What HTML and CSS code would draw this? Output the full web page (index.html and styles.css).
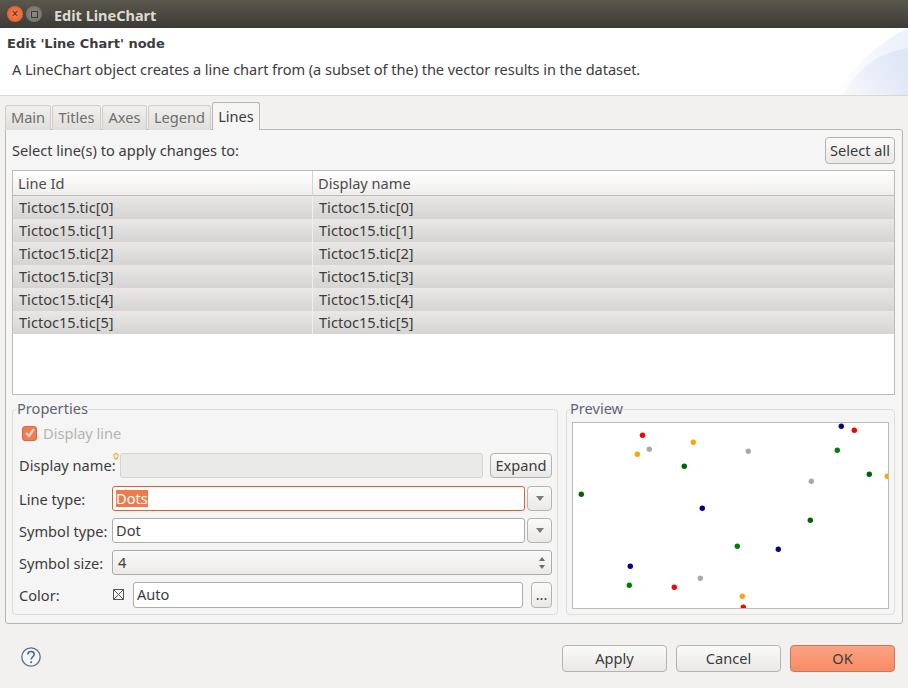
FILE: index.html
```html
<!DOCTYPE html>
<html lang="en">

<head>
    <meta charset="UTF-8">
    <title>Edit LineChart</title>
    <link rel="stylesheet" href="styles.css">
</head>

<body>
    <div class="titlebar">
        <span class="win-btn close">×</span>
        <span class="win-btn max"><i></i></span>
        <span class="win-title">Edit LineChart</span>
    </div>

    <div class="banner">
        <h1>Edit 'Line Chart' node</h1>
        <p>A LineChart object creates a line chart from (a subset of the) the vector results in the dataset.</p>
        <svg class="banner-art" viewBox="0 0 73 67">
            <defs>
                <linearGradient id="fade-a" x1="0" y1="1" x2="1" y2="0.4">
                    <stop offset="0" stop-color="#ffffff" />
                    <stop offset="1" stop-color="#eef2fb" />
                </linearGradient>
                <linearGradient id="fade-b" x1="0" y1="1" x2="1" y2="0.6">
                    <stop offset="0" stop-color="#f8f9fd" />
                    <stop offset="1" stop-color="#dfe6f6" />
                </linearGradient>
            </defs>
            <path d="M0 67C14 44 40 16 73 0V67Z" fill="url(#fade-a)" />
            <path d="M8 67C20 42 44 24 73 20V67Z" fill="url(#fade-b)" />
        </svg>
    </div>

    <div class="content">
        <div class="tabs">
            <span class="tab tab-main">Main</span>
            <span class="tab tab-titles">Titles</span>
            <span class="tab tab-axes">Axes</span>
            <span class="tab tab-legend">Legend</span>
            <span class="tab tab-lines active">Lines</span>
        </div>

        <div class="panel">
            <div class="select-row">
                <span class="select-text">Select line(s) to apply changes to:</span>
                <button class="btn select-all">Select all</button>
            </div>

            <div class="table">
                <div class="row head">
                    <div class="cell">Line Id</div>
                    <div class="cell">Display name</div>
                </div>
                <div class="row">
                    <div class="cell">Tictoc15.tic[0]</div>
                    <div class="cell">Tictoc15.tic[0]</div>
                </div>
                <div class="row">
                    <div class="cell">Tictoc15.tic[1]</div>
                    <div class="cell">Tictoc15.tic[1]</div>
                </div>
                <div class="row">
                    <div class="cell">Tictoc15.tic[2]</div>
                    <div class="cell">Tictoc15.tic[2]</div>
                </div>
                <div class="row">
                    <div class="cell">Tictoc15.tic[3]</div>
                    <div class="cell">Tictoc15.tic[3]</div>
                </div>
                <div class="row">
                    <div class="cell">Tictoc15.tic[4]</div>
                    <div class="cell">Tictoc15.tic[4]</div>
                </div>
                <div class="row">
                    <div class="cell">Tictoc15.tic[5]</div>
                    <div class="cell">Tictoc15.tic[5]</div>
                </div>
            </div>

            <div class="groups">
                <fieldset class="group props">
                    <legend>Properties</legend>

                    <div class="form-row check-row">
                        <span class="check">
                            <svg viewBox="0 0 12 12" width="12" height="12">
                                <path d="M2 6l3 3 5-7" fill="none" stroke="#d8d4ce" stroke-width="2.2" />
                            </svg>
                        </span>
                        <span class="muted">Display line</span>
                    </div>

                    <div class="form-row name-row">
                        <label class="name-label">Display name:</label>
                        <div class="field disabled">
                            <svg class="bulb" viewBox="0 0 6 8" width="6" height="8">
                                <path d="M3 .5a2.2 2.2 0 0 0-1.2 4V6h2.4V4.500A2.200 2.200 0 0 0 3 .5Z" fill="#fff3c8" stroke="#e69a1e" />
                            </svg>
                        </div>
                        <button class="btn expand">Expand</button>
                    </div>

                    <div class="form-row">
                        <label>Line type:</label>
                        <div class="field focus"><span class="sel">Dots</span></div>
                        <button class="btn drop"><i></i></button>
                    </div>

                    <div class="form-row">
                        <label>Symbol type:</label>
                        <div class="field">Dot</div>
                        <button class="btn drop"><i></i></button>
                    </div>

                    <div class="form-row">
                        <label>Symbol size:</label>
                        <div class="field spin">
                            <span>4</span>
                            <span class="arrows"><i class="up"></i><i></i></span>
                        </div>
                    </div>

                    <div class="form-row">
                        <label class="color-label">Color:</label>
                        <svg class="swatch" viewBox="0 0 11 11" width="11" height="11">
                            <path d="M.5.500h10v10H.5ZM.5.500l10 10M10.500.500l-10 10" fill="#f4f4f4" stroke="#555" />
                        </svg>
                        <div class="field tall">Auto</div>
                        <button class="btn more">...</button>
                    </div>
                </fieldset>

                <fieldset class="group preview">
                    <legend>Preview</legend>
                    <div class="canvas">
                        <svg viewBox="0 0 316 186" width="316" height="186">
                            <g fill="#ff0000">
                                <circle cx="69.500" cy="12.300" r="2.700" />
                                <circle cx="281.300" cy="7.300" r="2.700" />
                                <circle cx="101.300" cy="164.300" r="2.700" />
                                <circle cx="170.300" cy="184.300" r="2.700" />
                            </g>
                            <g fill="#ffa500">
                                <circle cx="120.300" cy="19.300" r="2.700" />
                                <circle cx="64.300" cy="31.300" r="2.700" />
                                <circle cx="314.300" cy="53.300" r="2.700" />
                                <circle cx="169.300" cy="173.300" r="2.700" />
                            </g>
                            <g fill="#a9a9a9">
                                <circle cx="76.300" cy="26.300" r="2.700" />
                                <circle cx="175.300" cy="28.300" r="2.700" />
                                <circle cx="238.300" cy="58.300" r="2.700" />
                                <circle cx="127.300" cy="155.300" r="2.700" />
                            </g>
                            <g fill="#006400">
                                <circle cx="111.300" cy="43.300" r="2.700" />
                                <circle cx="296.300" cy="51.300" r="2.700" />
                                <circle cx="8.300" cy="71.300" r="2.700" />
                                <circle cx="237.300" cy="97.300" r="2.700" />
                            </g>
                            <g fill="#008000">
                                <circle cx="264.300" cy="27.300" r="2.700" />
                                <circle cx="164.300" cy="123.300" r="2.700" />
                                <circle cx="56.300" cy="162.300" r="2.700" />
                            </g>
                            <g fill="#00008b">
                                <circle cx="268.300" cy="3.300" r="2.700" />
                                <circle cx="129.300" cy="85.300" r="2.700" />
                                <circle cx="205.300" cy="126.300" r="2.700" />
                                <circle cx="57.300" cy="143.300" r="2.700" />
                            </g>
                        </svg>
                    </div>
                </fieldset>
            </div>
        </div>
    </div>

    <div class="footer">
        <svg class="help" viewBox="0 0 20 20" width="20" height="20">
            <circle cx="10" cy="10" r="9.200" fill="#f6f6f8" stroke="#5a6f94" stroke-width="1.300" />
            <path d="M6.800 7.400C7 5.400 8.400 4.600 10 4.600c1.800 0 3.200 1 3.200 2.700 0 2.400-3 2.500-3 5.200" fill="none" stroke="#4a5f86" stroke-width="1.500" />
            <circle cx="10.200" cy="15.200" r="1" fill="#4a5f86" />
        </svg>
        <div class="actions">
            <button class="btn action">Apply</button>
            <button class="btn action">Cancel</button>
            <button class="btn action ok">OK</button>
        </div>
    </div>
</body>

</html>
```

FILE: styles.css
```css
* {
    box-sizing: border-box;
    margin: 0;
    padding: 0;
}

body {
    width: 908px;
    height: 688px;
    overflow: hidden;
    background: #f2f1f0;
    color: #3c3c3c;
    font-family: "Noto Sans", "Open Sans", sans-serif;
    font-size: 14.6px;
    display: flex;
    flex-direction: column;
}

/* window title */
.titlebar {
    height: 28px;
    flex: none;
    display: flex;
    align-items: center;
    padding-left: 7px;
    background: linear-gradient(#5a574c, #3c3b36);
    color: #dfdbd2;
}

.win-btn {
    width: 16px;
    height: 16px;
    border-radius: 50%;
    display: flex;
    align-items: center;
    justify-content: center;
    font-size: 12px;
    line-height: 1;
}

.win-btn.close {
    background: radial-gradient(#f28a5c, #e2501f);
    color: #5b2a14;
}

.win-btn.max {
    margin-left: 3px;
    background: radial-gradient(#8b8a84, #6e6d67);
}

.win-btn.max i {
    width: 7px;
    height: 7px;
    border: 1px solid #3c3b36;
}

.win-title {
    margin-left: 12px;
    padding-top: 1px;
    font-weight: 700;
    font-size: 14.500px;
}

/* white header */
.banner {
    height: 68px;
    flex: none;
    position: relative;
    background: #fff;
    border-bottom: 1px solid #d9d8d5;
    padding: 8px 7px 0;
}

.banner h1 {
    font-family: "DejaVu Sans", sans-serif;
    font-size: 13px;
    font-weight: 700;
    line-height: 15px;
}

.banner p {
    margin: 8px 0 0 5px;
    line-height: 20px;
    letter-spacing: -0.06px;
}

.banner-art {
    position: absolute;
    right: 0;
    top: 0;
    width: 73px;
    height: 67px;
}

/* tab folder */
.content {
    padding: 6px 5px 0;
    flex: none;
}

.tabs {
    display: flex;
    align-items: flex-end;
    height: 28px;
    margin-bottom: -1px;
    position: relative;
}

.tab {
    height: 25px;
    margin-right: 1px;
    padding-bottom: 2px;
    display: flex;
    align-items: center;
    justify-content: center;
    border: 1px solid #cfcdc9;
    border-bottom: 0;
    border-radius: 3px 3px 0 0;
    background: linear-gradient(#f1f0ee, #dfdedb);
    color: #6e6e6e;
}

.tab-main { width: 46px; }
.tab-titles { width: 49px; }
.tab-axes { width: 45px; }
.tab-legend { width: 63px; }

.tab.active {
    width: 48px;
    height: 28px;
    background: #f5f5f5;
    border-color: #b8b6b1;
    color: #3c3c3c;
    z-index: 1;
    margin-right: 0;
}

.panel {
    height: 495px;
    background: #f5f5f5;
    border: 1px solid #b8b6b1;
    border-radius: 0 3px 3px 3px;
    padding: 7px 7px 0 6px;
}

.select-row {
    height: 27px;
    display: flex;
    align-items: center;
    justify-content: space-between;
}

.select-text {
    padding-bottom: 2px;
}

.btn {
    font-family: inherit;
    font-size: 14.600px;
    color: #3c3c3c;
    border: 1px solid #b5b3ae;
    border-radius: 4px;
    background: linear-gradient(#fbfbfa, #e9e8e6);
    padding-bottom: 2px;
    display: flex;
    align-items: center;
    justify-content: center;
    flex: none;
}

.select-all {
    width: 70px;
    height: 27px;
}

/* table */
.table {
    margin-top: 6px;
    height: 225px;
    background: #fff;
    border: 1px solid #bdbbb6;
}

.row {
    height: 23px;
    display: grid;
    grid-template-columns: 299px 1fr;
    background: linear-gradient(#e9e8e6, #d5d4d2);
    line-height: 23px;
}

.row .cell {
    padding-left: 6px;
}

.row .cell + .cell {
    border-left: 1px solid #f0efed;
}

.row.head {
    height: 25px;
    background: linear-gradient(#ffffff, #efeeec);
    border-bottom: 1px solid #bdbbb6;
    color: #4c4c4c;
    line-height: 25px;
}

.row.head .cell + .cell {
    border-left-color: #d5d4d0;
}

.row.head .cell {
    padding-left: 5px;
}

/* groups */
.groups {
    margin-top: 5px;
    display: flex;
    gap: 8px;
}

.group {
    border: 1px solid #dfdedb;
    border-radius: 4px;
    height: 215px;
    min-width: 0;
}

.group legend {
    margin-left: -2px;
    padding-bottom: 2px;
    line-height: 16px;
    color: #5e6470;
}

.props {
    width: 546px;
    padding: 0 5px 0 6px;
}

.preview {
    width: 329px;
    padding: 4px 5px 0 5px;
}

.canvas {
    width: 317px;
    height: 187px;
    background: #fff;
    border: 1px solid #bdbbb6;
    overflow: hidden;
}

.canvas svg {
    display: block;
}

.form-row {
    display: flex;
    align-items: center;
    height: 25px;
    margin-bottom: 7px;
}

.form-row.name-row {
    margin-bottom: 8px;
}

.form-row label {
    width: 93px;
    flex: none;
}

.form-row label.name-label {
    width: 101px;
    padding-bottom: 2px;
}

.form-row label.color-label {
    width: 94px;
}

.check-row {
    height: 20px;
    margin-top: 5px;
    margin-bottom: 10px;
    padding-left: 3px;
}

.check {
    width: 15px;
    height: 15px;
    margin-right: 6px;
    border: 1px solid #d9693b;
    border-radius: 3px;
    background: #ef7d50;
    display: flex;
    align-items: center;
    justify-content: center;
}

.muted {
    color: #b5b4b1;
}

.field {
    flex: 1;
    height: 25px;
    position: relative;
    background: #fff;
    border: 1px solid #aeaca7;
    border-radius: 3px;
    padding-left: 3px;
    line-height: 23px;
    display: flex;
    align-items: center;
}

.field.disabled {
    background: #eaeae8;
    border-color: #d5d4d1;
}

.field.focus {
    border-color: #e2602e;
}

.sel {
    background: #ee7a4c;
    color: #fff;
    line-height: 17px;
}

.field.spin {
    background: linear-gradient(#fafafa, #ebeae8);
    justify-content: space-between;
    padding: 0 6px 0 5px;
}

.field.tall {
    height: 26px;
}

.bulb {
    position: absolute;
    left: -8px;
    top: -1px;
}

.expand {
    width: 62px;
    height: 25px;
    margin-left: 7px;
}

.drop {
    width: 25px;
    height: 25px;
    margin-left: 2px;
    padding-bottom: 0;
}

.drop i {
    border-left: 4px solid transparent;
    border-right: 4px solid transparent;
    border-top: 5px solid #7a7a78;
}

.arrows {
    display: flex;
    flex-direction: column;
    gap: 4px;
}

.arrows i {
    border-left: 3px solid transparent;
    border-right: 3px solid transparent;
    border-top: 4px solid #6e6e6c;
}

.arrows i.up {
    border-top: 0;
    border-bottom: 4px solid #6e6e6c;
}

.swatch {
    flex: none;
    margin-right: 9px;
}

.more {
    width: 21px;
    height: 26px;
    margin-left: 8px;
}

/* bottom buttons */
.footer {
    flex: 1;
    display: flex;
    align-items: flex-start;
    justify-content: space-between;
    padding: 21px 13px 0 21px;
}

.help {
    margin-top: 2px;
}

.actions {
    display: flex;
    gap: 9px;
}

.action {
    width: 105px;
    height: 27px;
}

.action.ok {
    background: linear-gradient(#fba383, #f78b64);
    border-color: #c9795a;
}
```
